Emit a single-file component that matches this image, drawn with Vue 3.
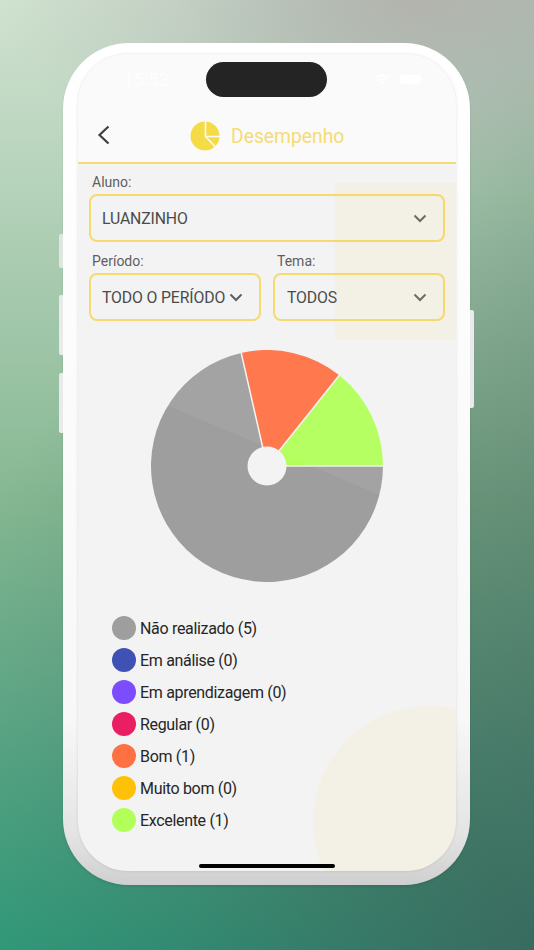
<script setup>
const legend = [
  { label: 'Não realizado (5)', color: '#9e9e9e' },
  { label: 'Em análise (0)', color: '#3f51b5' },
  { label: 'Em aprendizagem (0)', color: '#7c4dff' },
  { label: 'Regular (0)', color: '#e91e63' },
  { label: 'Bom (1)', color: '#ff7043' },
  { label: 'Muito bom (0)', color: '#ffc107' },
  { label: 'Excelente (1)', color: '#b2ff59' },
]
const R = 116
const pt = (deg) => {
  const a = (deg * Math.PI) / 180
  return `${(R + R * Math.cos(a)).toFixed(2)} ${(R - R * Math.sin(a)).toFixed(2)}`
}
const step = 360 / 7
const slices = [
  { d: `M${R} ${R}L${pt(0)}A${R} ${R} 0 0 0 ${pt(step)}Z`, color: '#b2ff59' },
  { d: `M${R} ${R}L${pt(step)}A${R} ${R} 0 0 0 ${pt(2 * step)}Z`, color: '#ff7043' },
  { d: `M${R} ${R}L${pt(2 * step)}A${R} ${R} 0 1 0 ${pt(360)}Z`, color: '#9e9e9e' },
]
const separators = `M${R} ${R}L${pt(0)}M${R} ${R}L${pt(step)}M${R} ${R}L${pt(2 * step)}`
</script>

<template>
  <div class="page">
    <div class="phone">
      <span class="btn btn-l b1"></span>
      <span class="btn btn-l b2"></span>
      <span class="btn btn-l b3"></span>
      <span class="btn btn-r"></span>
      <div class="screen">
        <header class="head">
          <div class="status">
            <span class="time">15:52</span>
            <span class="island"></span>
            <span class="status-icons">
              <svg width="16" height="12" viewBox="0 0 16 12" fill="none" stroke="#fff" stroke-width="1.6">
                <path d="M1 4.2a10 10 0 0 1 14 0M3.4 6.7a6.6 6.6 0 0 1 9.2 0M5.7 9a3.2 3.2 0 0 1 4.600 0" />
              </svg>
              <span class="battery"></span>
            </span>
          </div>
          <div class="nav">
            <svg class="back" width="14" height="20" viewBox="0 0 14 20" fill="none" stroke="#333" stroke-width="2.2">
              <path d="M11.5 1.5 2.5 10l9 8.5" />
            </svg>
            <div class="title">
              <svg width="30" height="30" viewBox="0 0 30 30">
                <circle cx="15" cy="15" r="14.5" fill="#f5da3c" />
                <path d="M15.5 0V15.5H30M15.5 15.5 25.5 26" fill="none" stroke="#fafafa" stroke-width="1.6" />
              </svg>
              <span>Desempenho</span>
            </div>
          </div>
        </header>

        <main class="body">
          <div class="field">
            <label>Aluno:</label>
            <div class="select">
              <span>LUANZINHO</span>
              <svg width="14" height="9" viewBox="0 0 14 9" fill="none" stroke="#555" stroke-width="2"><path d="M1.500 1.500 7 7l5.500-5.500" /></svg>
            </div>
          </div>
          <div class="row">
            <div class="field">
              <label>Período:</label>
              <div class="select">
                <span>TODO O PERÍODO</span>
                <svg width="14" height="9" viewBox="0 0 14 9" fill="none" stroke="#555" stroke-width="2"><path d="M1.500 1.500 7 7l5.500-5.500" /></svg>
              </div>
            </div>
            <div class="field second">
              <label>Tema:</label>
              <div class="select">
                <span>TODOS</span>
                <svg width="14" height="9" viewBox="0 0 14 9" fill="none" stroke="#555" stroke-width="2"><path d="M1.500 1.500 7 7l5.500-5.500" /></svg>
              </div>
            </div>
          </div>

          <svg class="pie" width="232" height="232" viewBox="0 0 232 232">
            <path v-for="s in slices" :key="s.color" :d="s.d" :fill="s.color" />
            <path :d="separators" fill="none" stroke="#f3f3f3" stroke-width="1.5" />
            <circle cx="116" cy="116" r="19.500" fill="#f3f3f3" />
          </svg>

          <ul class="legend">
            <li v-for="item in legend" :key="item.label">
              <span class="dot" :style="{ background: item.color }"></span>
              <span>{{ item.label }}</span>
            </li>
          </ul>
        </main>

        <div class="tint-diagonal"></div>
        <div class="tint-square"></div>
        <div class="tint-circle"></div>
        <div class="home"></div>
      </div>
    </div>
  </div>
</template>

<style>
html, body { margin: 0; padding: 0; }
</style>

<style scoped>
.page {
  width: 534px;
  height: 950px;
  box-sizing: border-box;
  padding: 43px 0 0 63px;
  overflow: hidden;
  font-family: Roboto, "Liberation Sans", sans-serif;
  background:
    radial-gradient(420px 200px at 420px 0, rgba(178, 178, 172, 0.95) 0, rgba(178, 182, 178, 0.55) 45%, rgba(178, 190, 190, 0) 100%),
    radial-gradient(680px 760px at 100% 100%, rgba(55, 80, 80, 0.62) 0, rgba(55, 80, 80, 0) 100%),
    linear-gradient(90deg, rgba(80, 125, 100, 0) 35%, rgba(80, 125, 100, 0.32) 100%),
    linear-gradient(180deg, #d0e2d0 0%, #a4c8ac 32%, #85b892 53%, #62ae8a 74%, #2fa37e 100%);
}
.phone {
  position: relative;
  width: 407px;
  height: 842px;
  box-sizing: border-box;
  padding: 11px 14px 14px 15px;
  border-radius: 66px;
  background: linear-gradient(180deg, #ffffff 0%, #f8f8f8 80%, #e4e4e4 94%, #cfcfcf 100%);
  box-shadow: 0 2px 3px rgba(0, 0, 0, 0.08);
}
.btn {
  position: absolute;
  width: 4px;
  background: #eaeaea;
}
.btn-l { left: -4px; border-radius: 2px 0 0 2px; }
.b1 { top: 191px; height: 34px; background: #dfe6df; }
.b2 { top: 252px; height: 60px; }
.b3 { top: 330px; height: 60px; }
.btn-r { right: -4px; top: 267px; height: 98px; border-radius: 0 2px 2px 0; }
.screen {
  position: relative;
  width: 378px;
  height: 817px;
  border-radius: 50px;
  overflow: hidden;
  background: #f3f3f3;
  box-shadow: 0 0 3px rgba(0, 0, 0, 0.12);
}
.head {
  height: 108px;
  background: #fafafa;
  border-bottom: 2px solid #f5d96f;
  box-sizing: content-box;
}
.status {
  height: 43px;
  padding: 8px 35px 0 46px;
  display: flex;
  align-items: center;
  justify-content: space-between;
  position: relative;
  box-sizing: border-box;
}
.time {
  color: #ffffff;
  font-size: 18px;
  opacity: 0.7;
}
.island {
  position: absolute;
  left: 128px;
  top: 8px;
  width: 121px;
  height: 35px;
  border-radius: 18px;
  background: #171717;
}
.status-icons {
  display: flex;
  align-items: center;
  gap: 10px;
}
.battery {
  width: 21px;
  height: 9px;
  border-radius: 3px;
  background: #ffffff;
}
.nav {
  display: flex;
  align-items: center;
  height: 65px;
  box-sizing: border-box;
  padding: 10px 0 0 19px;
  position: relative;
}
.title {
  position: absolute;
  left: 112px;
  top: 24px;
  display: flex;
  align-items: center;
  gap: 11px;
  font-size: 19.3px;
  color: #f6d96c;
}
.body {
  padding: 9px 11px 0;
  display: flex;
  flex-direction: column;
}
.field { display: flex; flex-direction: column; flex: 1; min-width: 0; }
.field label {
  font-size: 14px;
  line-height: 18px;
  color: #555;
  padding-left: 3px;
  margin-bottom: 3px;
}
.second label { padding-left: 4px; }
.row {
  display: flex;
  gap: 12px;
  margin-top: 10px;
}
.select {
  height: 48px;
  box-sizing: border-box;
  border: 2px solid #f7d768;
  border-radius: 8px;
  padding: 0 16px 0 11px;
  display: flex;
  align-items: center;
  justify-content: space-between;
  font-size: 15.8px;
  letter-spacing: -0.14px;
  white-space: nowrap;
  color: #3f3f3f;
}
.second .select { padding-left: 12px; }
.pie {
  align-self: center;
  margin-top: 29px;
  display: block;
}
.legend {
  list-style: none;
  margin: 34px 0 0;
  padding: 0 0 0 23px;
  display: flex;
  flex-direction: column;
  gap: 8px;
}
.legend li {
  display: flex;
  align-items: center;
  gap: 4px;
  height: 24px;
  font-size: 16px;
  font-weight: 450;
  letter-spacing: -0.32px;
  color: #262626;
}
.dot {
  width: 24px;
  height: 24px;
  border-radius: 50%;
}
.tint-diagonal {
  position: absolute;
  inset: 0;
  background: rgba(255, 255, 255, 0.06);
  clip-path: polygon(0 0, 100% 0, 100% 473px, 0 314px);
  pointer-events: none;
}
.tint-square {
  position: absolute;
  left: 257px;
  top: 129px;
  width: 121px;
  height: 157px;
  background: rgba(245, 215, 110, 0.1);
  pointer-events: none;
}
.tint-circle {
  position: absolute;
  left: 235px;
  top: 652px;
  width: 232px;
  height: 232px;
  border-radius: 50%;
  background: rgba(245, 215, 110, 0.1);
  pointer-events: none;
}
.home {
  position: absolute;
  left: 121px;
  bottom: 3px;
  width: 136px;
  height: 4px;
  border-radius: 2px;
  background: #000;
}
</style>
